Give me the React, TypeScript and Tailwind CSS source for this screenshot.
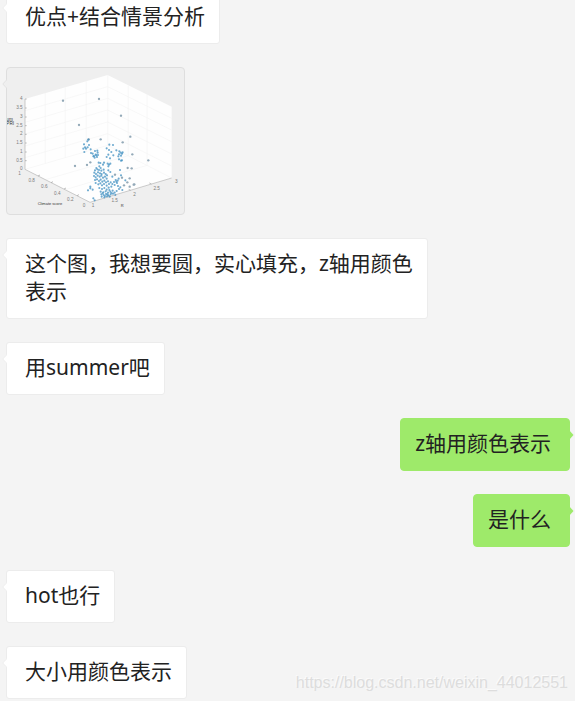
import type { ReactNode } from "react";
import clsx from "clsx";

type Message = {
  id: number;
  from: "me" | "other";
  text?: string;
  chart?: boolean;
};

const messages: Message[] = [
  { id: 1, from: "other", text: "优点+结合情景分析" },
  { id: 2, from: "other", chart: true },
  { id: 3, from: "other", text: "这个图，我想要圆，实心填充，z轴用颜色表示" },
  { id: 4, from: "other", text: "用summer吧" },
  { id: 5, from: "me", text: "z轴用颜色表示" },
  { id: 6, from: "me", text: "是什么" },
  { id: 7, from: "other", text: "hot也行" },
  { id: 8, from: "other", text: "大小用颜色表示" },
];

// far away points, drawn greyer
const outliers = [
  [168, 98], [276, 93], [342, 143], [216, 171], [245, 214], [281, 214],
  [370, 206], [347, 223], [376, 259], [424, 277], [204, 294], [362, 300],
  [374, 301], [240, 291], [250, 283], [368, 331], [361, 343], [380, 350],
  [368, 356], [351, 352], [345, 329], [324, 320], [382, 349],
];

// the dense part of the cloud
const cluster = [
  [244, 215], [241, 220], [231, 229], [246, 231], [234, 238], [229, 242],
  [237, 242], [232, 252], [242, 238], [251, 244], [252, 255], [257, 257],
  [264, 249], [271, 248], [266, 260], [272, 254], [268, 262], [261, 264],
  [270, 267], [263, 269], [259, 265], [273, 261], [299, 241], [307, 230],
  [318, 231], [306, 246], [313, 252], [299, 267], [304, 260], [309, 271],
  [337, 250], [341, 254], [345, 257], [336, 259], [342, 263], [347, 253],
  [334, 265], [342, 278], [345, 277], [319, 262], [328, 247], [336, 274],
  [275, 284], [280, 285], [288, 290], [302, 287], [306, 290], [310, 287],
  [304, 295], [291, 284], [277, 295], [281, 300], [268, 300], [271, 304],
  [264, 307], [276, 306], [283, 308], [290, 305], [262, 314], [267, 318],
  [273, 313], [279, 316], [284, 318], [291, 314], [296, 318], [300, 322],
  [261, 324], [266, 328], [272, 323], [278, 326], [283, 323], [288, 329],
  [294, 326], [299, 332], [264, 336], [270, 334], [276, 339], [281, 335],
  [286, 341], [292, 338], [297, 343], [303, 340], [266, 345], [274, 349],
  [280, 346], [285, 352], [291, 348], [299, 353], [306, 348], [311, 343],
  [316, 348], [321, 342], [326, 336], [332, 338], [335, 332], [330, 345],
  [323, 351], [328, 341], [313, 356], [305, 359], [250, 361], [257, 365],
  [277, 360], [285, 363], [292, 360], [299, 365], [281, 371], [289, 373],
  [296, 370], [303, 374], [310, 371], [317, 368], [323, 374], [329, 369],
  [283, 379], [290, 381], [297, 378], [304, 382], [311, 379], [318, 377],
  [325, 381], [284, 386], [292, 388], [300, 385], [308, 386], [287, 376],
  [294, 384], [301, 379], [313, 375], [307, 366], [336, 363], [340, 358],
  [259, 391], [263, 397], [250, 356], [243, 367], [310, 312], [316, 326],
  [342, 322], [339, 306], [333, 354], [346, 366], [355, 337], [304, 307],
];

const zTicks = [
  { y: 94, label: "4" },
  { y: 120, label: "3.5" },
  { y: 147, label: "3" },
  { y: 173, label: "2.5" },
  { y: 199, label: "2" },
  { y: 225, label: "1.5" },
  { y: 252, label: "1" },
  { y: 278, label: "0.5" },
  { y: 302, label: "0" },
];

const floorTicks = [
  { x: 38, y: 322, label: "1" },
  { x: 74, y: 341, label: "0.8" },
  { x: 112, y: 361, label: "0.6" },
  { x: 151, y: 381, label: "0.4" },
  { x: 190, y: 400, label: "0.2" },
  { x: 231, y: 418, label: "0" },
  { x: 258, y: 418, label: "1" },
  { x: 323, y: 402, label: "1.5" },
  { x: 383, y: 383, label: "2" },
  { x: 449, y: 365, label: "2.5" },
  { x: 508, y: 346, label: "3" },
];

function ScatterChart() {
  return (
    <svg
      viewBox="0 0 531 438"
      className="block w-[177px]"
      fontFamily="Liberation Sans, sans-serif"
      fontSize="14"
      role="img"
    >
      <path d="M54 93 L302 21 L494 116 V330 L249 403 L54 304 Z" fill="#fefefe" />
      <path
        d="M54 128 L302 56 L494 151 M54 163 L302 91 L494 186 M54 198 L302 126 L494 221 M54 234 L302 162 L494 258 M54 269 L302 197 L494 294 M54 304 L302 232 L494 330 M115 75 V286 M175 58 V269 M238 40 V250 M302 21 V232 M364 52 V263 M420 80 V292 M115 335 L364 263 M175 365 L420 292"
        fill="none"
        stroke="#f5f5f5"
        strokeWidth="2"
      />
      <path d="M54 93 V304 L249 403 L494 330" fill="none" stroke="#b4b4b4" strokeWidth="2" />
      <path
        d="M54 93 h5 M54 120 h5 M54 147 h5 M54 173 h5 M54 199 h5 M54 225 h5 M54 252 h5 M54 278 h5 M93 324 l6 -3 M132 344 l6 -3 M171 363 l6 -3 M210 383 l6 -3 M310 385 l-6 -3 M371 367 l-6 -3 M433 348 l-6 -3"
        stroke="#a0a0a0"
        strokeWidth="2"
      />
      <g fill="#7c7c7c">
        {zTicks.map((tick) => (
          <text key={tick.label} x="47" y={tick.y + 3} textAnchor="end">
            {tick.label}
          </text>
        ))}
        {floorTicks.map((tick, index) => (
          <text key={index} x={tick.x} y={tick.y} textAnchor="middle">
            {tick.label}
          </text>
        ))}
      </g>
      <g fill="#333333">
        <text x="-2" y="158">um</text>
        <text x="-2" y="171">PRI</text>
        <text x="92" y="411" fontSize="12">Climate score</text>
        <text x="341" y="417" fontSize="12">R</text>
      </g>
      <g fill="#93a9b8">
        {outliers.map(([x, y]) => (
          <circle key={`${x}-${y}`} cx={x} cy={y} r="3.5" />
        ))}
      </g>
      <g fill="#3f8fc0" fillOpacity="0.75">
        {cluster.map(([x, y]) => (
          <circle key={`${x}-${y}`} cx={x} cy={y} r="3.2" />
        ))}
      </g>
    </svg>
  );
}

function Bubble({ message, children }: { message: Message; children: ReactNode }) {
  const mine = message.from === "me";

  return (
    <li className={clsx("flex", mine ? "justify-end" : "justify-start")}>
      <div
        className={clsx(
          "relative max-w-[422px] border",
          mine && "rounded-[4px] border-[#9eea6a] bg-[#9eea6a] pt-[10px] pr-[18px] pb-[13px] pl-[14px]",
          !mine && message.chart && "rounded-[4px] border-[#dedede] bg-[#efefef]",
          !mine && !message.chart && "rounded-[3px] border-[#ececec] bg-white pt-[10px] pr-[14px] pb-[13px] pl-[18px]"
        )}
      >
        {/* Arrow */}
        {mine ? (
          <svg viewBox="0 0 5 10" className="absolute top-[11px] -right-[5px] h-[10px] w-[5px]">
            <path d="M0 0 L4.5 5 L0 10 Z" fill="#9eea6a" />
          </svg>
        ) : (
          <svg viewBox="0 0 5 10" className="absolute top-[11px] -left-[5px] h-[10px] w-[5px]">
            <path
              d="M5 0.5 L0.8 5 L5 9.5"
              fill={message.chart ? "#efefef" : "#ffffff"}
              stroke={message.chart ? "#dedede" : "#ececec"}
              strokeWidth="0.8"
            />
          </svg>
        )}
        {children}
      </div>
    </li>
  );
}

export default function App() {
  return (
    <main className="relative min-h-screen overflow-hidden bg-[#f4f4f4] font-['Noto_Sans','Noto_Sans_CJK_SC',sans-serif] text-[21px] leading-7 text-[#222222]">
      {/* the list is scrolled, so the first bubble is cut off at the top */}
      <ul className="-mt-[9px] flex flex-col gap-[23px] pr-[5px] pl-[6px]">
        {messages.map((message) => (
          <Bubble key={message.id} message={message}>
            {message.chart ? <ScatterChart /> : <p>{message.text}</p>}
          </Bubble>
        ))}
      </ul>

      {/* Watermark */}
      <span className="absolute right-[7px] bottom-[6px] font-['Liberation_Sans',sans-serif] text-base leading-6 text-[#dddddd] [text-shadow:-1px_-1px_0_#fbfbfb]">
        https://blog.csdn.net/weixin_44012551
      </span>
    </main>
  );
}
